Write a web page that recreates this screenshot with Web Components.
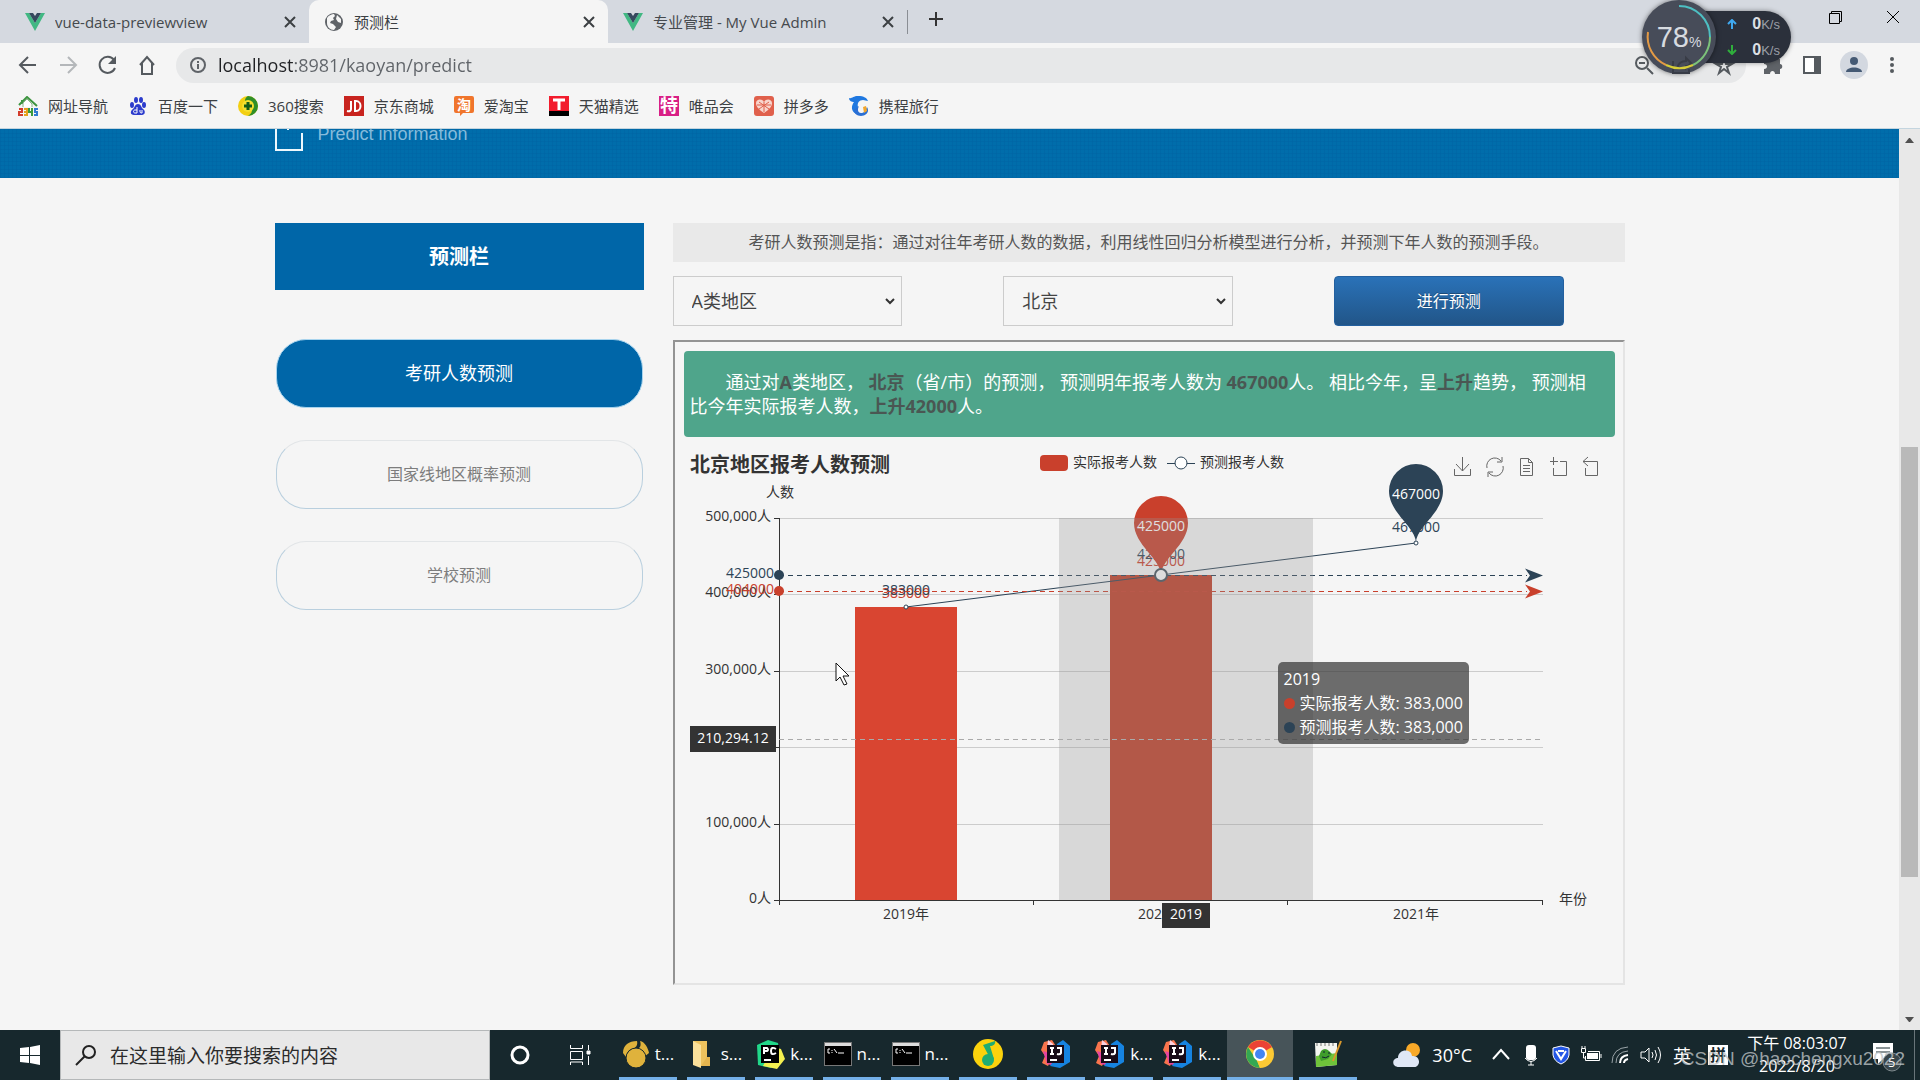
<!DOCTYPE html>
<html lang="zh-CN">
<head>
<meta charset="utf-8">
<title>预测栏</title>
<style>
html, body { height: 100%; }
body {
  margin: 0;
  display: flex;
  flex-direction: column;
  background: #f5f5f5;
  color: #333;
  font-family: "Open Sans", "Noto Sans CJK SC", sans-serif;
  font-size: 16px;
  overflow: hidden;
}
page-view { flex: 1; min-height: 0; }
</style>
</head>
<body>

<tab-strip>
  <browser-tab><vue-logo slot="icon"></vue-logo>vue-data-previewview</browser-tab>
  <browser-tab active>
    <svg slot="icon" width="20" height="20" viewBox="0 0 20 20"><circle cx="10" cy="10" r="9" fill="#5f6368"/><path d="M3 6c2-3 5-4 7-4l1 2-2 2 1 2-3 1-1 2 3 1 3 3-2 3c-4 0-7-3-7-7zM13 3l4 4v4l-3-1-2-3z" fill="#f5f5f5"/></svg>
    预测栏
  </browser-tab>
  <browser-tab><vue-logo slot="icon"></vue-logo>专业管理 - My Vue Admin</browser-tab>
</tab-strip>

<tool-bar></tool-bar>

<bookmark-bar>
  <bookmark-item>
    <svg slot="icon" width="20" height="20" viewBox="0 0 20 20"><path d="M1 9l8-8 10 9M4 4v4" fill="none" stroke="#3d9440" stroke-width="2"/><path d="M5 11V7l4-4 5 5v3" fill="#fff" stroke="#8ab58a"/><path d="M1 13h3v3H1v3h4" fill="none" stroke="#d33c2c" stroke-width="2"/><path d="M6 13h3v6H6M6 16h3" fill="none" stroke="#e6a11d" stroke-width="2"/><path d="M11 12v4h3M14 12v8" fill="none" stroke="#3c9a3c" stroke-width="2"/><path d="M20 13h-3v3h2v3h-3" fill="none" stroke="#2f7ad0" stroke-width="2"/></svg>
    网址导航
  </bookmark-item>
  <bookmark-item>
    <svg slot="icon" width="20" height="20" viewBox="0 0 20 20" fill="#2c3ccc"><ellipse cx="4" cy="9" rx="2" ry="3"/><ellipse cx="8" cy="4" rx="2" ry="3"/><ellipse cx="13" cy="4" rx="2" ry="3"/><ellipse cx="16" cy="9" rx="2" ry="3"/><path d="M10 8c3 0 3 3 5 5 3 2 2 6-1 6H6c-4 0-4-4-1-6 2-2 2-5 5-5z"/><path d="M9 11v6H7c-2 0-2-3 0-3h2M12 14v2c0 1 2 1 2 1v-3" fill="none" stroke="#fff"/></svg>
    百度一下
  </bookmark-item>
  <bookmark-item>
    <svg slot="icon" width="20" height="20" viewBox="0 0 20 20"><circle cx="10" cy="10" r="10" fill="#f3cf12"/><path d="M10 0a10 10 0 0 1 0 20c7-5 3-8 0-10S5 3 10 0z" fill="#2f8f28"/><circle cx="10" cy="10" r="6" fill="#f5e02e"/><path d="M10 6v8M6 10h8" stroke="#145c18" stroke-width="3"/></svg>
    360搜索
  </bookmark-item>
  <bookmark-item>
    <svg slot="icon" width="20" height="20" viewBox="0 0 20 20"><rect width="20" height="20" fill="#c8241f"/><path d="M7 5v8q0 3-4 2M11 5v10h1c6 0 6-10 0-10z" fill="none" stroke="#fff" stroke-width="2"/></svg>
    京东商城
  </bookmark-item>
  <bookmark-item>
    <svg slot="icon" width="20" height="20" viewBox="0 0 20 20" overflow="visible"><path d="M2 0h16q2 0 2 2v13q0 2-2 2H9l-3 3v-3H2q-2 0-2-2V2q0-2 2-2z" fill="#f0752c"/><text x="3" y="14" font-size="14" font-weight="700" fill="#fff">淘</text></svg>
    爱淘宝
  </bookmark-item>
  <bookmark-item>
    <svg slot="icon" width="20" height="20" viewBox="0 0 20 20"><rect width="20" height="20" fill="#f21c2d"/><rect y="15" width="20" height="5"/><path d="M4 4h12M10 4v10" stroke="#fff" stroke-width="3"/></svg>
    天猫精选
  </bookmark-item>
  <bookmark-item>
    <svg slot="icon" width="20" height="20" viewBox="0 0 20 20" overflow="visible"><rect width="20" height="20" fill="#d81f86"/><text x="1" y="16" font-size="18" font-weight="700" fill="#fff">特</text></svg>
    唯品会
  </bookmark-item>
  <bookmark-item>
    <svg slot="icon" width="20" height="20" viewBox="0 0 20 20"><rect width="20" height="20" rx="3" fill="#e0604c"/><path d="M10 17C4 13 2 10 2 7c0-4 6-5 8-1 2-4 8-3 8 1 0 3-2 6-8 10z" fill="#f8d5cd"/><path d="M5 6l10 7M15 6L5 13M10 6v10M3 9h14" stroke="#e0604c"/></svg>
    拼多多
  </bookmark-item>
  <bookmark-item>
    <svg slot="icon" width="20" height="20" viewBox="0 0 20 20"><path d="M0 2c3 1 4-2 9-2 6 0 9 2 10 5l-5-1c-4 0-6 3-5 7l-2 7c-5-3-5-8-2-12C3 6 0 5 0 2z" fill="#1f78e0"/><path d="M18 11c3 5-1 9-6 9-4 0-7-3-7-6l5-4c-2 4-1 7 2 7s4-2 6-6z" fill="#2a6fd4"/><path d="M14 11l3-1 1 5-3 2z" fill="#f2a62c"/></svg>
    携程旅行
  </bookmark-item>
</bookmark-bar>

<page-view>
  <site-banner>Predict information</site-banner>
  <two-columns>
    <side-menu slot="side" heading="预测栏">
      <menu-button active>考研人数预测</menu-button>
      <menu-button>国家线地区概率预测</menu-button>
      <menu-button>学校预测</menu-button>
    </side-menu>
    <predict-form>考研人数预测是指：通过对往年考研人数的数据，利用线性回归分析模型进行分析，并预测下年人数的预测手段。</predict-form>
    <result-frame>
      <result-alert slot="alert">通过对<b>A</b>类地区， <b>北京</b>（省/市）的预测， 预测明年报考人数为 <b>467000</b>人。 相比今年，呈<b>上升</b>趋势， 预测相比今年实际报考人数，<b>上升42000</b>人。</result-alert>
      <predict-chart heading="北京地区报考人数预测"></predict-chart>
    </result-frame>
  </two-columns>
</page-view>

<task-bar></task-bar>
<speed-widget></speed-widget>

<script>
// Base class: puts css + markup in an open shadow root
class BaseElement extends HTMLElement {
  constructor() {
    super();
    this.attachShadow({mode: 'open'});
    this.render();
  }

  render() {
    this.shadowRoot.innerHTML = '<style>* { box-sizing: border-box; } ' +
      'button { font: inherit; color: inherit; border: 0; background: none; padding: 0; }' +
      this.css() + '</style>' + this.html();
  }

  css() { return ''; }
  html() { return '<slot></slot>'; }
}

class VueLogo extends BaseElement {
  css() { return ':host { display: block; width: 20px; height: 18px; } svg { display: block; }'; }
  html() {
    return `<svg width="20" height="18" viewBox="0 0 20 18">
      <path d="M0 0h4l6 10 6-10h4L10 18z" fill="#41b883"/>
      <path d="M4 0h4l2 3 2-3h4l-6 10z" fill="#35495e"/></svg>`;
  }
}
customElements.define('vue-logo', VueLogo);

/* ---------- browser window ---------- */

class BrowserTab extends BaseElement {
  css() {
    return `
      :host {
        display: flex; align-items: center; gap: 10px;
        width: 299px; height: 43px; padding: 0 9px 0 15px;
        box-sizing: border-box; font-size: 15px; line-height: 22px; color: #45494d;
      }
      :host([active]) { background: #f5f5f5; border-radius: 10px 10px 0 0; color: #3c4043; }
      .title { flex: 1; white-space: nowrap; overflow: hidden; }
      button { width: 20px; height: 20px; }
      svg { display: block; }`;
  }
  html() {
    return `<slot name="icon"></slot><span class="title"><slot></slot></span>
      <button aria-label="关闭"><svg width="20" height="20" viewBox="0 0 20 20">
      <path d="M5 5l10 10M15 5L5 15" stroke="#3c4043" stroke-width="2"/></svg></button>`;
  }
}
customElements.define('browser-tab', BrowserTab);

class TabStrip extends BaseElement {
  css() {
    return `
      :host { display: flex; align-items: flex-end; height: 43px; padding-left: 10px; background: #d5d9e0; }
      .sep { width: 1px; height: 24px; margin: 0 18px 9px 0; background: #8a8e94; }
      button { width: 20px; height: 43px; }
      .win { margin-left: auto; display: flex; padding: 0 17px 4px 0; gap: 38px; }
      .win button { height: 39px; }`;
  }
  html() {
    return `<slot></slot><span class="sep"></span>
      <button aria-label="新标签页"><svg width="20" height="20" viewBox="0 0 20 20"><path d="M10 3v14M3 10h14" stroke="#333" stroke-width="2"/></svg></button>
      <div class="win">
        <button aria-label="还原"><svg width="20" height="20" viewBox="0 0 20 20" fill="none" stroke="#000" stroke-width="1"><path d="M4.500 6.500h10v10h-10zM6.500 6V4.500h10v10H15"/></svg></button>
        <button aria-label="关闭窗口"><svg width="20" height="20" viewBox="0 0 20 20"><path d="M4 4l12 12M16 4L4 16" stroke="#000"/></svg></button>
      </div>`;
  }
}
customElements.define('tab-strip', TabStrip);

class ToolBar extends BaseElement {
  css() {
    return `
      :host { display: flex; align-items: center; height: 44px; padding: 0 16px 0 16px; background: #f5f5f5; }
      button { width: 24px; height: 24px; margin-right: 16px; flex: none; }
      svg { display: block; }
      .box {
        flex: 1; display: flex; align-items: center; height: 35px; margin: 0 14px 0 0;
        padding: 0 10px; border-radius: 18px; background: #e7e8e9;
      }
      .box button { margin: 0 8px 0 0; }
      .box button:last-child { margin: 0 0 0 48px; }
      input {
        flex: 1; min-width: 0; border: 0; outline: 0; padding: 0; height: 30px; font: 18px "Open Sans", sans-serif;
        background: linear-gradient(90deg, #202124 76px, #5f6368 76px);
        -webkit-background-clip: text; -webkit-text-fill-color: transparent;
      }
      .avatar { width: 28px; height: 28px; margin-right: 12px; border-radius: 50%; background: #d3d8e0; padding: 4px; }
      .last { margin-right: 0; }`;
  }
  html() {
    return `
      <button aria-label="后退"><svg width="24" height="24" viewBox="0 0 24 24" fill="none" stroke="#555a5f" stroke-width="2"><path d="M20 12H5M12 4l-8 8 8 8"/></svg></button>
      <button aria-label="前进"><svg width="24" height="24" viewBox="0 0 24 24" fill="none" stroke="#b4b7ba" stroke-width="2"><path d="M4 12h15M12 4l8 8-8 8"/></svg></button>
      <button aria-label="刷新"><svg width="24" height="24" viewBox="0 0 24 24"><path d="M18 7a8 8 0 1 0 1 8" fill="none" stroke="#555a5f" stroke-width="2"/><path d="M20 3v8h-8z" fill="#555a5f"/></svg></button>
      <button aria-label="主页"><svg width="24" height="24" viewBox="0 0 24 24" fill="none" stroke="#555a5f" stroke-width="2"><path d="M4 12l7-8 7 8M6 10v11h10V10"/></svg></button>
      <div class="box">
        <button aria-label="网站信息"><svg width="24" height="24" viewBox="0 0 24 24" fill="none" stroke="#5f6368" stroke-width="2"><circle cx="12" cy="12" r="7"/><path d="M12 11v5M12 8v2"/></svg></button>
        <input aria-label="地址栏" value="localhost:8981/kaoyan/predict">
        <button aria-label="缩小"><svg width="24" height="24" viewBox="0 0 24 24" fill="none" stroke="#555a5f" stroke-width="2"><circle cx="10" cy="10" r="6"/><path d="M15 15l6 6M7 10h6"/></svg></button>
        <button aria-label="收藏"><svg width="24" height="24" viewBox="0 0 24 24" fill="none" stroke="#555a5f" stroke-width="2"><path d="M12 5l2 6h6l-5 3 2 6-5-4-5 4 2-6-5-3h6z"/></svg></button>
      </div>
      <button aria-label="扩展程序"><svg width="24" height="24" viewBox="0 0 24 24" fill="#5f6368"><path d="M4 6h5c-1-5 7-5 6 0h5v5c3 0 3 5 0 5v5h-5c0-4-5-4-5 0H4v-5c4 0 4-5 0-5z"/></svg></button>
      <button aria-label="侧边栏"><svg width="24" height="24" viewBox="0 0 24 24"><path d="M4 4h16v16H4z" fill="#fff" stroke="#555a5f" stroke-width="2"/><path d="M14 4h6v16h-6z" fill="#555a5f"/></svg></button>
      <button class="avatar" aria-label="用户"><svg width="20" height="20" viewBox="0 0 20 20" fill="#455a74"><circle cx="10" cy="6" r="4"/><path d="M2 17c0-6 16-6 16 0z"/></svg></button>
      <button class="last" aria-label="菜单"><svg width="24" height="24" viewBox="0 0 24 24" fill="#555a5f"><circle cx="12" cy="6" r="2"/><circle cx="12" cy="12" r="2"/><circle cx="12" cy="18" r="2"/></svg></button>`;
  }
}
customElements.define('tool-bar', ToolBar);

class BookmarkItem extends BaseElement {
  css() {
    return `
      :host { display: block; }
      a { display: flex; align-items: center; gap: 10px; font-size: 15px; line-height: 20px; color: #3c4043; text-decoration: none; white-space: nowrap; }`;
  }
  html() { return '<a href="#"><slot name="icon"></slot><span><slot></slot></span></a>'; }
}
customElements.define('bookmark-item', BookmarkItem);

class BookmarkBar extends BaseElement {
  css() {
    return ':host { display: flex; align-items: center; gap: 20px; height: 42px; padding: 0 18px 3px; ' +
      'box-sizing: border-box; background: #f5f5f5; border-bottom: 1px solid #c4d5df; }';
  }
}
customElements.define('bookmark-bar', BookmarkBar);

/* ---------- page ---------- */

class PageView extends BaseElement {
  css() {
    return `
      :host { display: flex; background: #f5f5f5; }
      main { flex: 1; min-width: 0; overflow: hidden; }
      .bar { width: 21px; display: flex; flex-direction: column; align-items: center; background: #e8e8e8; }
      .bar svg { flex: none; }
      .thumb { width: 17px; flex: 430; background: #b9b9b9; }
      .before { flex: 297; } .after { flex: 132; }`;
  }
  html() {
    return `<main><slot></slot></main>
      <div class="bar">
        <svg width="21" height="21" viewBox="0 0 21 21"><path d="M6 14h9l-4-5h-1z" fill="#505050"/></svg>
        <span class="before"></span><span class="thumb"></span><span class="after"></span>
        <svg width="21" height="21" viewBox="0 0 21 21"><path d="M6 8h9l-4 5h-1z" fill="#505050"/></svg>
      </div>`;
  }
}
customElements.define('page-view', PageView);

class SiteBanner extends BaseElement {
  css() {
    return `
      :host {
        display: block; height: 49px; overflow: hidden; color: #86bbdb;
        background: repeating-linear-gradient(0deg, #0060a055 0 1px, transparent 1px 4px),
          repeating-linear-gradient(90deg, #0060a055 0 1px, transparent 1px 4px), #006dab;
      }
      div { display: flex; gap: 15px; max-width: 1350px; margin: 0 auto; font: 18px/20px "Liberation Sans", sans-serif; }
      svg { flex: none; }
      span { margin-top: -5px; }`;
  }
  html() {
    return `<div><svg width="28" height="24" viewBox="0 0 28 24"><path d="M1 0v21h26V4M13 0v1" fill="none" stroke="#eef8fd" stroke-width="2"/></svg><span><slot></slot></span></div>`;
  }
}
customElements.define('site-banner', SiteBanner);

class TwoColumns extends BaseElement {
  css() {
    return `
      :host { display: grid; grid-template-columns: 369fr 952fr; gap: 29px; max-width: 1350px; margin: 45px auto 0; }
      .body { display: flex; flex-direction: column; gap: 14px; min-width: 0; }`;
  }
  html() { return '<slot name="side"></slot><div class="body"><slot></slot></div>'; }
}
customElements.define('two-columns', TwoColumns);

class SideMenu extends BaseElement {
  css() {
    return `
      :host { display: block; }
      h2 { margin: 0 0 49px; padding: 18px 0; background: #0066a8; color: #fff; font-size: 20px; line-height: 31px; text-align: center; }
      nav { display: flex; flex-direction: column; gap: 32px; padding: 0 1px; }`;
  }
  html() { return `<h2>${this.getAttribute('heading')}</h2><nav><slot></slot></nav>`; }
}
customElements.define('side-menu', SideMenu);

class MenuButton extends BaseElement {
  css() {
    return `
      :host { display: block; }
      button {
        width: 100%; height: 69px; padding-bottom: 3px; border: 1px solid #b9cfde; border-top-color: #e2e5e7; border-radius: 30px;
        font-size: 16px; color: #7d7d7d;
      }
      :host([active]) button { background: #0066a8; border-color: #a8d4ee; color: #fff; font-size: 18px; }`;
  }
  html() { return '<button><slot></slot></button>'; }
}
customElements.define('menu-button', MenuButton);

class PredictForm extends BaseElement {
  css() {
    return `
      :host { display: block; }
      p { margin: 0 0 14px; background: #e9e9e9; color: #555; text-align: center; line-height: 39px; white-space: nowrap; }
      form { display: grid; grid-template-columns: repeat(3, 1fr); gap: 101px; padding-right: 61px; }
      label { display: flex; align-items: center; position: relative; }
      select {
        appearance: none; width: 100%; height: 50px; padding: 0 18px; border: 1px solid #ccc; border-radius: 0;
        background: transparent; color: #444; font: 18px "Open Sans", "Noto Sans CJK SC", sans-serif;
      }
      label svg { position: absolute; right: 6px; pointer-events: none; }
      button {
        height: 50px; padding-bottom: 2px; border: 1px solid #23609f; border-radius: 4px; color: #fff; text-shadow: 0 -1px 0 rgba(0, 0, 0, .3);
        background: linear-gradient(#2a72b8, #215588);
      }`;
  }
  html() {
    const arrow = '<svg width="12" height="12" viewBox="0 0 12 12"><path d="M2 4l4 4 4-4" fill="none" stroke="#333" stroke-width="2"/></svg>';
    return `<p><slot></slot></p>
      <form onsubmit="return false">
        <label><select aria-label="地区类别"><option>A类地区</option></select>${arrow}</label>
        <label><select aria-label="省市"><option>北京</option></select>${arrow}</label>
        <button type="submit">进行预测</button>
      </form>`;
  }
}
customElements.define('predict-form', PredictForm);

class ResultFrame extends BaseElement {
  css() {
    return ':host { display: block; padding: 9px 8px 0 9px; border: 2px solid; border-color: #939393 #e4e4e4 #e4e4e4 #939393; }';
  }
  html() { return '<slot name="alert"></slot><slot></slot>'; }
}
customElements.define('result-frame', ResultFrame);

class ResultAlert extends BaseElement {
  css() {
    return `
      :host {
        display: block; padding: 19px 16px 19px 6px; border-radius: 4px; background: #4fa58b; color: #fff;
        font-size: 18px; line-height: 24px; text-indent: 36px;
      }
      ::slotted(b) { color: #4a5753; }`;
  }
}
customElements.define('result-alert', ResultAlert);

class PredictChart extends BaseElement {
  css() {
    return `
      :host { display: block; position: relative; }
      svg { display: block; width: 100%; height: auto; font-size: 14px; }
      .tip {
        position: absolute; left: 594px; top: 225px; padding: 5px 6px; border-radius: 5px;
        background: rgba(50, 50, 50, .7); color: #fff; font-size: 16px; line-height: 24px; white-space: nowrap;
      }
      .tip i { display: inline-block; width: 11px; height: 11px; margin-right: 5px; border-radius: 50%; }`;
  }

  html() {
    const red = '#c9402c', dark = '#2c4356';
    const years = ['2019年', '2020年', '2021年'];
    const actual = [383000, 425000];
    const predict = [383000, 425000, 467000];
    const left = 95, right = 859, top = 81, bottom = 463;
    const band = (right - left) / years.length;
    const px = i => Math.round(left + band * (i + .5));
    const py = v => Math.round(bottom - v * (bottom - top) / 500000);
    const text = (x, y, s, more) => `<text x="${x}" y="${y + 5}" ${more || ''}>${s}</text>`;
    const mid = 'text-anchor="middle" ';
    const end = 'text-anchor="end" ';

    let s = text(6, 30, this.getAttribute('heading'), 'font-size="20" font-weight="700" fill="#333"');

    // legend
    s += `<rect x="356" y="18" width="28" height="16" rx="4" fill="${red}"/>` + text(389, 25, '实际报考人数', 'fill="#333"');
    s += `<path d="M483 26.500h28" stroke="${dark}"/><circle cx="497" cy="26" r="6" fill="#fff" stroke="${dark}"/>` + text(516, 25, '预测报考人数', 'fill="#333"');

    // toolbox
    s += `<g fill="none" stroke="#666">
      <path d="M778.500 20v14M772 27l6.500 7 6.500-7M770.500 32v6.500h16V32"/>
      <path d="M803 31a8 8 0 0 1 14-7M818 20v5h-5M819 29a8 8 0 0 1-14 7M804 40v-5h5"/>
      <path d="M836.500 21.500h8l4 4v13h-12zM844.500 21.500v4h4M839 28.500h7M839 31.500h7M839 34.500h7"/>
      <path d="M866 24.500h8M869.500 20v8M876 24.500h6.500v14h-13V31"/>
      <path d="M899 24.500h14.500v14h-12V31M904 20l-5 4.500 5 4.500"/></g>`;

    // y axis
    for (let v = 0; v <= 500000; v += 100000) {
      if (v) s += `<path d="M${left} ${py(v)}.5H${right}" stroke="#ccc"/>`;
      s += `<path d="M${left - 5} ${py(v)}.5h5" stroke="#333"/>` + text(87, py(v) - 2, v.toLocaleString('en-US') + '人', end + 'fill="#333"');
    }
    s += text(96, 55, '人数', mid + 'fill="#333"');

    // bars
    actual.forEach((v, i) => {
      s += `<rect x="${px(i) - 51}" y="${py(v)}" width="102" height="${bottom - py(v)}" fill="${i ? '#c13e27' : '#d94531'}"/>`;
      s += text(px(i), py(v) - 14, v, mid + `fill="${red}"`);
    });

    // x axis
    s += `<path d="M${left}.5 ${top}V${bottom + 5}M${left} ${bottom}.5H${right}" fill="none" stroke="#333"/>`;
    years.forEach((name, i) => {
      s += `<path d="M${Math.round(left + band * (i + 1)) - 1}.5 ${bottom}v5" stroke="#333"/>` + text(px(i), bottom + 14, name, mid + 'fill="#333"');
    });
    s += text(875, bottom - 1, '年份', 'fill="#333"');

    // line series
    s += `<polyline points="${predict.map((v, i) => px(i) + ',' + py(v)).join(' ')}" fill="none" stroke="${dark}"/>`;
    predict.forEach((v, i) => {
      s += text(px(i), py(v) - (i == 1 ? 21 : i == 0 ? 17 : 16), v, mid + `fill="${dark}"`);
      if (i != 1) s += `<circle cx="${px(i)}" cy="${py(v)}" r="2" fill="#fff" stroke="${dark}"/>`;
    });

    // average lines
    [[404000, red], [425000, dark]].forEach(([v, c]) => {
      s += `<path d="M${left} ${py(v)}.5H${right - 16}" stroke="${c}" stroke-dasharray="5 4"/>
        <circle cx="${left}" cy="${py(v)}" r="5" fill="${c}"/>
        <path d="M${right} ${py(v)}.5l-18 -7 5 7 -5 7z" fill="${c}"/>`;
      s += text(left - 5, py(v) - 2, v, end + `fill="${c}"`);
    });

    // max pins
    [[1, 425000, red], [2, 467000, dark]].forEach(([i, v, c]) => {
      s += `<path transform="translate(${px(i)} ${py(v)})" d="M0 0C0-16-27-30-27-52a27 27 0 0 1 54 0C27-30 0-16 0 0z" fill="${c}"/>`;
      s += text(px(i), py(v) - 49, v, mid + 'fill="#fff"');
    });

    // axis pointer
    s += `<rect x="375" y="${top}" width="254" height="${bottom - top}" fill="rgba(150,150,150,.3)"/>
      <circle cx="${px(1)}" cy="${py(425000)}" r="6" fill="#ddd" stroke="#5d666d" stroke-width="2"/>
      <path d="M${left} 302.5H${right}" stroke="#aaa" stroke-dasharray="5 4"/>
      <rect x="6" y="289" width="86" height="26" fill="#333"/>` + text(49, 301, '210,294.12', mid + 'fill="#fff"');
    s += '<rect x="478" y="466" width="48" height="25" fill="#333"/>' + text(502, 477, '2019', mid + 'fill="#fff"');

    // mouse pointer
    s += '<path d="M152 226v18l4-4 4 8 3-1-4-8h6z" fill="#fff" stroke="#111"/>';

    return `<svg viewBox="0 0 931 546">${s}</svg>
      <div class="tip">2019<br><i style="background: ${red}"></i>实际报考人数: 383,000<br><i style="background: ${dark}"></i>预测报考人数: 383,000</div>`;
  }
}
customElements.define('predict-chart', PredictChart);

/* ---------- desktop ---------- */

class TaskItem extends BaseElement {
  css() {
    return `
      :host { display: block; }
      button {
        display: flex; align-items: center; justify-content: center; gap: 5px; width: 58px; height: 50px;
        border-bottom: 3px solid #74b0e8; font-size: 17px; color: #fff; white-space: nowrap;
      }
      :host([active]) button { background: #475459; width: 66px; margin: 0 -4px; }`;
  }
  html() { return '<button><slot name="icon"></slot><slot></slot></button>'; }
}
customElements.define('task-item', TaskItem);

class TaskBar extends BaseElement {
  css() {
    return `
      :host { display: flex; height: 50px; background: #17282d; color: #fff; position: relative; }
      svg { display: block; flex: none; }
      .cell { display: flex; align-items: center; justify-content: center; width: 30px; height: 50px; }
      .start { width: 60px; }
      .search { display: flex; align-items: center; gap: 13px; width: 430px; padding-left: 14px; background: #e8e8e8; border: 1px solid #b5b8b9; }
      .search input { flex: 1; border: 0; padding: 0 0 2px; outline: 0; background: none; font: 19px "Noto Sans CJK SC", sans-serif; }
      .search input::placeholder { color: #2b2b2b; opacity: 1; }
      .items { display: flex; gap: 10px; margin-left: 9px; }
      .tray { display: flex; margin-left: auto; }
      .weather { width: auto; gap: 11px; margin-right: 14px; font-size: 18px; }
      .ime { width: 32px; font-size: 18px; }
      .pin { width: 40px; }
      .pin b { background: #fff; color: #17282d; font-size: 16px; line-height: 20px; width: 20px; text-align: center; }
      .clock { width: 118px; flex-direction: column; font-size: 16px; line-height: 23px; }
      .note { width: 58px; }
      .end { width: 6px; border-left: 1px solid #69757a; }
      .mark { position: absolute; right: 15px; bottom: 10px; font: 19px/22px "Liberation Sans", sans-serif; color: rgba(190, 195, 197, .8); }`;
  }
  html() {
    const cmd = '<svg slot="icon" width="28" height="24" viewBox="0 0 28 24"><path d="M0 0h28v24H0z" fill="#777"/><path d="M1 1h26v3H1z" fill="#ddd"/><path d="M1 4h26v19H1z" fill="#000"/><path d="M6 7H4v4h2M8 8v1M8 10v1M10 7l3 4M14 11h6" fill="none" stroke="#fff"/></svg>';
    const ij = '<svg slot="icon" width="30" height="30" viewBox="0 0 30 30"><path d="M3 3l8-2 5 8-9 18-6-3 3-7-4-6z" fill="#f9744c"/><path d="M7 1l5 4 2 9-8-3z" fill="#f9d0e0"/><path d="M2 12l9 3 3 12-8-2z" fill="#e743a0"/><path d="M16 5l6-4 7 6v16l-10 6-10-2 4-6z" fill="#1683e0"/><path d="M6 6h17v18H6z" fill="#180b18"/><path d="M9 9h4M11 9v6M9 15h4M16 9h4v5q-1 2-4 1M9 21h7" fill="none" stroke="#fff" stroke-width="2"/></svg>';
    return `
      <button class="cell start" aria-label="开始"><svg width="20" height="20" viewBox="0 0 20 20" fill="#fff"><path d="M0 3l9-1v8H0zM10 2l10-2v10H10zM0 11h9v7l-9-1zM10 11h10v9l-10-2z"/></svg></button>
      <label class="search"><svg width="22" height="22" viewBox="0 0 22 22" fill="none" stroke="#222" stroke-width="2"><circle cx="14" cy="8" r="6"/><path d="M10 12l-9 9"/></svg><input placeholder="在这里输入你要搜索的内容" aria-label="搜索"></label>
      <button class="cell start" aria-label="Cortana"><svg width="22" height="22" viewBox="0 0 22 22"><circle cx="11" cy="11" r="8" fill="none" stroke="#fff" stroke-width="3"/></svg></button>
      <button class="cell start" aria-label="任务视图"><svg width="22" height="22" viewBox="0 0 22 22" fill="none" stroke="#fff"><path d="M1.500 1v3.500h12V1M1.500 7.500h12v8h-12zM1.500 21v-3h12v3M19.500 1v5M19.500 12v9"/><path d="M18 7h3v3h-3z" fill="#fff"/></svg></button>
      <div class="items">
        <task-item><svg slot="icon" width="28" height="28" viewBox="0 0 28 28" fill="#dfb23c"><path d="M1 13C1 5 7 1 15 1c1 4-1 7-5 8-4 1-5 4-6 8zM18 1c5 1 8 7 9 12l-5 4c-1-4-3-6-6-8 3-2 3-5 2-8z"/><circle cx="14" cy="18" r="10" stroke="#17282d"/></svg>t...</task-item>
        <task-item><svg slot="icon" width="26" height="28" viewBox="0 0 26 28"><path d="M3 1h14v25H8z" fill="#eec25d"/><path d="M3 1l8 4v23l-8-3z" fill="#fbe09a"/><path d="M17 17h3v9h-9z" fill="#e5b54e"/></svg>s...</task-item>
        <task-item><svg slot="icon" width="30" height="30" viewBox="0 0 30 30"><path d="M2 6l11-5 10 3 3 18-10 7L3 26z" fill="#21d789"/><path d="M18 8l8 2 4 10-8 10-14-3z" fill="#f3ef50"/><path d="M6 6h18v18H6z" fill="#000"/><path d="M9 15V9h3q2 2 0 3H9M21 10q-5-3-5 2t5 2M9 21h7" fill="none" stroke="#fff" stroke-width="2"/></svg>k...</task-item>
        <task-item>${cmd}n...</task-item>
        <task-item>${cmd}n...</task-item>
        <task-item><svg slot="icon" width="30" height="30" viewBox="0 0 30 30"><circle cx="15" cy="15" r="15" fill="#fbd20c"/><circle cx="15" cy="21" r="6" fill="#1fac72"/><path d="M10 6l12-4c1 3-2 5-5 5l4 13-3 1z" fill="#1fac72"/></svg></task-item>
        <task-item>${ij}</task-item>
        <task-item>${ij}k...</task-item>
        <task-item>${ij}k...</task-item>
        <task-item active><svg slot="icon" width="28" height="28" viewBox="0 0 28 28"><circle cx="14" cy="14" r="14" fill="#fcc934"/><path d="M14 14L2 7a14 14 0 0 1 24 0z" fill="#ea4335"/><path d="M2 7l9 14 3 7A14 14 0 0 1 2 7z" fill="#34a853"/><path d="M11 20l3 8 7-12z" fill="#fcc934"/><circle cx="14" cy="14" r="7" fill="#fff"/><circle cx="14" cy="14" r="5" fill="#4285f4"/></svg></task-item>
        <task-item><svg slot="icon" width="28" height="28" viewBox="0 0 28 28"><path d="M1 3h22v22l-21 2z" fill="#f4f6f0"/><path d="M2 16l21-3v12L2 27z" fill="#6fc43a"/><path d="M3 3v3M7 3v3M11 3v3M15 3v3M19 3v3" stroke="#777"/><path d="M7 11q4-4 8 0l3 3-4 5-7 2-2-5z" fill="#3f9d2c"/><path d="M9 12h2M14 13h2M8 17q4 2 7-1" stroke="#123" fill="none"/><path d="M27 1l-8 20" stroke="#d9992c" stroke-width="2"/></svg></task-item>
      </div>
      <div class="tray">
        <button class="cell weather"><svg width="28" height="28" viewBox="0 0 28 28"><circle cx="20" cy="9" r="7" fill="#f8a928"/><path d="M6 26c-8 0-7-9-1-9 0-9 13-10 14-2 9-1 9 11 2 11z" fill="#dfe7f5"/></svg>30°C</button>
        <button class="cell" aria-label="显示隐藏的图标"><svg width="20" height="20" viewBox="0 0 20 20"><path d="M2 14l8-9 8 9" fill="none" stroke="#fff" stroke-width="2"/></svg></button>
        <button class="cell" aria-label="麦克风"><svg width="14" height="22" viewBox="0 0 14 22"><rect x="2" y="1" width="10" height="15" rx="3" fill="#fff"/><path d="M1 14q6 7 12 0M7 17v4M4 21h6" fill="none" stroke="#fff"/></svg></button>
        <button class="cell" aria-label="安全"><svg width="20" height="20" viewBox="0 0 20 20"><path d="M10 1l8 2v7q-1 6-8 9-7-3-8-9V3z" fill="#2457e6" stroke="#fff"/><path d="M5 6l5 8 5-8M7 6h6" fill="none" stroke="#fff" stroke-width="2"/></svg></button>
        <button class="cell" aria-label="电池"><svg width="22" height="20" viewBox="0 0 22 20"><path d="M7 8h11v6H7z" fill="#fff"/><path d="M5.500 11v4.500h14v-9H8M21 9v4M1.500 3.500h4v4h-4zM2 1v2M5 1v2M3.500 7v6H5" fill="none" stroke="#fff"/></svg></button>
        <button class="cell" aria-label="网络"><svg width="20" height="20" viewBox="0 0 20 20" fill="none" stroke="#fff"><path d="M13 18q0-3 4-4M9 18q0-7 8-8" stroke-width="2"/><path d="M5 18Q5 7 17 6M1 18Q1 3 17 2" stroke="#9aa4a8"/></svg></button>
        <button class="cell" aria-label="音量"><svg width="22" height="20" viewBox="0 0 22 20" fill="none" stroke="#fff"><path d="M1 7h4l4-4v14l-4-4H1zM12 7q2 3 0 6M15 5q3 5 0 10M18 2q5 8 0 16"/></svg></button>
        <button class="cell ime">英</button>
        <button class="cell pin"><b>拼</b></button>
        <button class="cell clock"><span>下午 08:03:07</span><span>2022/8/20</span></button>
        <button class="cell note" aria-label="通知"><svg width="34" height="34" viewBox="0 0 34 34"><path d="M5 5h20v16H15l-5 5v-5H5z" fill="#fff"/><path d="M8 10h14M8 14h14" stroke="#17282d"/><circle cx="24" cy="24" r="9" fill="#39464b" stroke="#7e898d"/><text x="20" y="29" font-size="13" fill="#fff">5</text></svg></button>
        <span class="end"></span>
      </div>
      <span class="mark">CSDN @haochengxu2022</span>`;
  }
}
customElements.define('task-bar', TaskBar);

// floating memory / network meter, lies over the browser window
class SpeedWidget extends BaseElement {
  css() {
    return `
      :host { position: absolute; top: 0; right: 129px; display: flex; align-items: center; height: 74px; color: #d7dbe0; font-family: "Liberation Sans", sans-serif; }
      .disc {
        position: relative; z-index: 1; display: flex; align-items: center; justify-content: center; width: 74px; height: 74px;
        border-radius: 50%; background: #474c59; box-shadow: 0 0 5px rgba(0, 0, 0, .5); font-size: 29px;
      }
      .disc svg { position: absolute; inset: 0; }
      small { font-size: 14px; margin-top: 10px; }
      .pill {
        width: 112px; height: 52px; margin-left: -37px; padding: 0 11px 0 48px; border-radius: 0 26px 26px 0;
        background: #2b303b; box-shadow: 0 0 5px rgba(0, 0, 0, .4);
      }
      .pill div { display: flex; align-items: center; height: 26px; white-space: nowrap; font-size: 13px; color: #9b9fa7; }
      .pill svg { margin-right: auto; }
      .pill b { font-size: 16px; color: #dcdfe3; }`;
  }
  html() {
    return `<div class="disc"><svg width="74" height="74" viewBox="0 0 74 74" fill="none" stroke-width="2">
        <path d="M31 61v12h16v-4M35 68q2-7 9-7v-3l5 5-5 5v-3" stroke="#383c46"/>
        <path d="M37 6a31 31 0 0 1 31 31" stroke="#4dbfc3"/><path d="M68 37a31 31 0 0 1-17 28" stroke="#7cc27a"/>
        <path d="M51 65a31 31 0 0 1-27 0" stroke="#d6cd38"/><path d="M24 65A31 31 0 0 1 6 32" stroke="#e39a45"/></svg>
        <span>78</span><small>%</small></div>
      <div class="pill">
        <div><svg width="10" height="10" viewBox="0 0 10 10"><path d="M5 10V2M1 5l4-4 4 4" fill="none" stroke="#3fa8f0" stroke-width="2"/></svg><b>0</b>K/s</div>
        <div><svg width="10" height="10" viewBox="0 0 10 10"><path d="M5 0v8M1 5l4 4 4-4" fill="none" stroke="#2fae3c" stroke-width="2"/></svg><b>0</b>K/s</div>
      </div>`;
  }
}
customElements.define('speed-widget', SpeedWidget);
</script>
</body>
</html>
